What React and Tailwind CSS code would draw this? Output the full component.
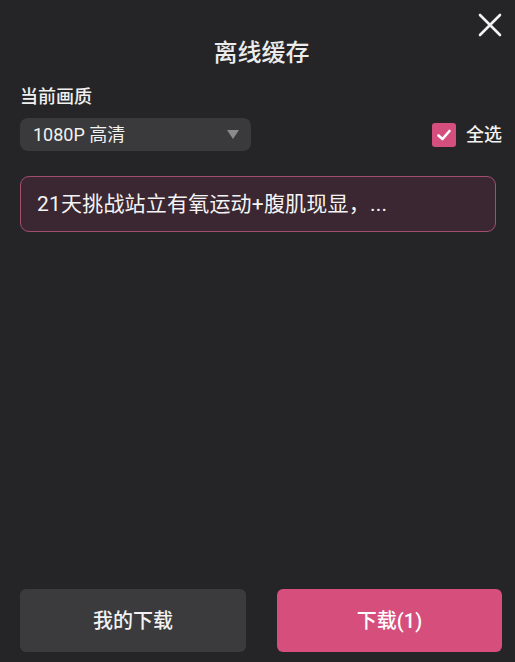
import React, { useState } from 'react';

const font = { fontFamily: 'Roboto, "Noto Sans CJK SC", "Noto Sans", sans-serif' };

export default function App() {
  const [checked, setChecked] = useState(true);

  return (
    <div
      className="w-[515px] h-[662px] bg-[#252527] text-white flex flex-col px-5 relative"
      style={font}
    >
      <button className="absolute right-[12px] top-[12px] w-[26px] h-[26px] flex items-center justify-center">
        <svg width="24" height="24" viewBox="0 0 24 24" fill="none" stroke="#f2f2f2" strokeWidth="2.6" strokeLinecap="round">
          <path d="M2 2L22 22M22 2L2 22" />
        </svg>
      </button>

      <h1 className="text-[24px] leading-none font-medium text-center mt-[41px] pl-[8px] text-[#ececec]">离线缓存</h1>

      <div className="text-[18px] leading-none font-medium mt-[23px] text-[#f0f0f0]">当前画质</div>

      <div className="flex items-center justify-between mt-[12px]">
        <div className="w-[231px] h-[33px] rounded-[8px] bg-[#3a3a3c] flex items-center justify-between pl-[13px] pr-[12px]">
          <span className="text-[18px] leading-none text-[#f2f2f2]">1080P 高清</span>
          <svg width="12" height="9" viewBox="0 0 12 9">
            <path d="M0 0H12L6 9Z" fill="#8a8a8c" />
          </svg>
        </div>
        <button className="flex items-center gap-[10px] mr-[-7px]" onClick={() => setChecked(!checked)}>
          <span className="w-[24px] h-[24px] rounded-[3px] bg-[#d44f7e] flex items-center justify-center">
            {checked && (
              <svg width="18" height="18" viewBox="0 0 18 18" fill="none" stroke="#fff" strokeWidth="2.6" strokeLinecap="round" strokeLinejoin="round">
                <path d="M3.5 9.5L7.5 13L14.5 5" />
              </svg>
            )}
          </span>
          <span className="text-[18px] leading-none font-medium text-[#f2f2f2]">全选</span>
        </button>
      </div>

      <div className="mt-[25px] h-[56px] rounded-[9px] border border-[#a24f6c] bg-[#3b2731] flex items-center px-4 mr-[-1px]">
        <span className="text-[21px] leading-none tracking-[0.2px] text-[#f4f4f4]">21天挑战站立有氧运动+腹肌现显，...</span>
      </div>

      <div className="flex-1" />

      <div className="flex gap-[31px] mb-[10px] mr-[-7px]">
        <button className="w-[226px] h-[63px] rounded-[6px] bg-[#3b3b3d] text-[20px] font-medium text-[#f2f2f2]">我的下载</button>
        <button className="flex-1 h-[63px] rounded-[6px] bg-[#d54e7c] text-[20px] font-medium text-white">下载(1)</button>
      </div>
    </div>
  );
}
